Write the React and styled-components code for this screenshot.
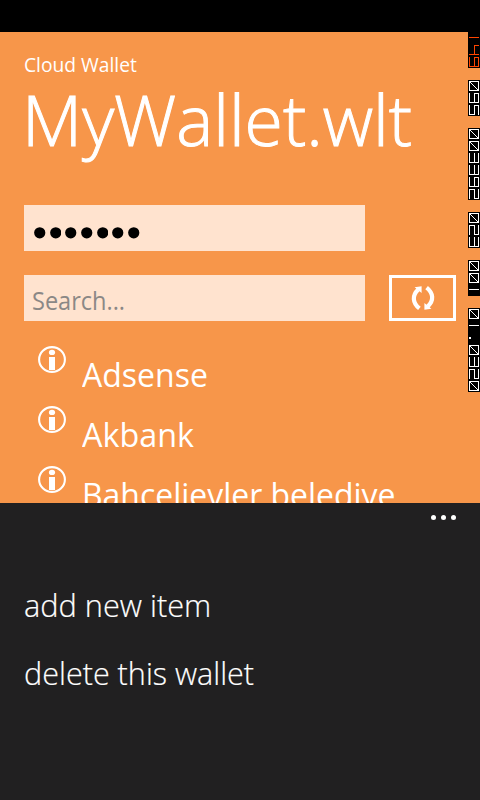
import React from "react";
import styled, { createGlobalStyle } from "styled-components";

const GlobalStyle = createGlobalStyle`
  * { box-sizing: border-box; }
  body { margin: 0; background: #000; }
`;

const Phone = styled.div`
  position: relative;
  display: flex;
  flex-direction: column;
  width: 480px;
  height: 800px;
  overflow: hidden;
  background: #000;
  color: #fff;
  font-family: "Open Sans", "Noto Sans", sans-serif;
`;

const StatusBar = styled.div`
  flex: none;
  height: 32px;
`;

const Page = styled.main`
  flex: none;
  height: 471px;
  padding: 22px 24px 0;
  overflow: hidden;
  background: #f7964a;
`;

const Label = styled.span`
  display: block;
  width: max-content;
  white-space: nowrap;
  transform-origin: 0 50%;
  transform: scaleX(${(p) => p.$stretch || 1});
`;

const AppName = styled.div`
  height: 20px;
  font-size: 19.5px;
  line-height: 21px;
`;

const Title = styled.h1`
  height: 72px;
  margin: 9px 0 50px -2px;
  font-size: 70px;
  line-height: 73px;
  font-weight: 300;
  -webkit-text-stroke: 1px #fff;
`;

const Form = styled.div`
  display: grid;
  grid-template-columns: 341px 67px;
  grid-auto-rows: 46px;
  gap: 24px;
`;

const Field = styled.div`
  display: flex;
  align-items: center;
  gap: 4.2px;
  padding: 4px 8px 0 10px;
  background: #ffe3cf;
  grid-column: 1;
`;

const Bullet = styled.svg`
  flex: none;
  width: 11.5px;
  height: 12px;
  margin-top: 5px;
`;

const Placeholder = styled.span`
  margin-left: -2px;
  color: #8b8886;
  font-size: 26px;
  line-height: 36px;
`;

const RefreshButton = styled.button`
  display: flex;
  align-items: center;
  justify-content: center;
  padding: 0;
  border: 3px solid #fff;
  background: transparent;
`;

const List = styled.ul`
  margin: 24px 0 0;
  padding: 0;
  list-style: none;
`;

const Item = styled.li`
  display: flex;
  gap: 16px;
  height: 60px;
  padding-left: 14px;
`;

const ItemName = styled.span`
  padding-top: 9px;
  font-size: 33.5px;
  line-height: 40px;
`;

const Menu = styled.nav`
  flex: 1;
  padding: 12px 24px;
  background: #212021;
`;

const More = styled.div`
  display: flex;
  justify-content: flex-end;
  gap: 5px;
  height: 68px;
`;

const MoreDot = styled.span`
  width: 5px;
  height: 5px;
  border-radius: 50%;
  background: #fff;
`;

const MenuItem = styled.div`
  height: 68px;
  font-size: 32px;
  line-height: 44px;
  font-weight: 300;
  -webkit-text-stroke: 0.2px #fff;
`;

const Counters = styled.aside`
  position: absolute;
  top: 32px;
  right: 0;
  display: flex;
  flex-direction: column;
  gap: 12px;
`;

const Counter = styled.svg`
  display: block;
  background: #000;
`;

const InfoIcon = () => (
  <svg width="28" height="28" viewBox="0 0 28 28">
    <ellipse cx="14" cy="14.5" rx="12.9" ry="12.4" fill="none" stroke="#fff" strokeWidth="2.1" />
    <ellipse cx="14" cy="7.4" rx="3.1" ry="2.7" fill="#fff" />
    <path d="M11 12h6v13h-6z" fill="#fff" />
  </svg>
);

const RefreshIcon = () => (
  <svg width="24" height="26" viewBox="0 0 24 26">
    <g fill="none" stroke="#fff" strokeWidth="4.2">
      <path d="M8.4 23.4C1.4 17.8 1 10.4 7.2 4.6" />
      <path d="M15.6 2.6C22.6 8.2 23 15.6 16.8 21.4" />
    </g>
    <path d="M3.6 2.3l7-1v6.6zM20.4 23.7l-7 1v-6.6z" fill="#fff" />
  </svg>
);

// Segments in a 12px cell turned a quarter clockwise: glyph top faces right.
const SEG = {
  t: "M10.5 1v10",
  m: "M6.5 1v10",
  b: "M1.5 1v10",
  tl: "M6 1.5h5",
  bl: "M1 1.5h5",
  tr: "M6 10.5h5",
  br: "M1 10.5h5",
  slash: "M1.5 1.5l9 9",
  one: "M1 5.5h10",
  dot: "M1 6h2",
};

const DIGITS = {
  0: ["t", "b", "tl", "bl", "tr", "br", "slash"],
  1: ["one"],
  2: ["t", "tr", "m", "bl", "b"],
  3: ["t", "m", "b", "tr", "br"],
  4: ["tl", "m", "tr", "br"],
  5: ["t", "tl", "m", "br", "b"],
  9: ["t", "tl", "tr", "m", "br", "b"],
  ".": ["dot"],
};

const Readout = ({ value, color = "#fff" }) => (
  <Counter
    width="12"
    height={value.length * 12}
    viewBox={`0 0 12 ${value.length * 12}`}
    role="img"
    aria-label={value}
  >
    {[...value].map((c, i) => (
      <g key={i} transform={`translate(0 ${i * 12})`} fill="none" stroke={color}>
        {DIGITS[c].map((s) => (
          <path key={s} d={SEG[s]} strokeWidth={s === "dot" ? 2 : 1} />
        ))}
      </g>
    ))}
  </Counter>
);

const READOUTS = [
  { value: "149", color: "#ff4500" },
  { value: "095" },
  { value: "003392" },
  { value: "023" },
  { value: "001" },
  { value: "01.0320" },
];

const ITEMS = [
  { name: "Adsense", stretch: 0.955 },
  { name: "Akbank", stretch: 0.965 },
  { name: "Bahcelievler belediye", stretch: 0.953 },
];

export default function App() {
  return (
    <Phone>
      <GlobalStyle />
      <StatusBar />
      <Page>
        <AppName><Label $stretch={0.985}>Cloud Wallet</Label></AppName>
        <Title><Label $stretch={0.995}>MyWallet.wlt</Label></Title>
        <Form>
          <Field>
            {Array.from({ length: 7 }, (_, i) => (
              <Bullet key={i} viewBox="0 0 11.5 12">
                <circle cx="5.75" cy="5.8" r="5.6" />
              </Bullet>
            ))}
          </Field>
          <Field>
            <Placeholder><Label $stretch={0.905}>Search...</Label></Placeholder>
          </Field>
          <RefreshButton aria-label="Refresh"><RefreshIcon /></RefreshButton>
        </Form>
        <List>
          {ITEMS.map((it) => (
            <Item key={it.name}>
              <InfoIcon />
              <ItemName><Label $stretch={it.stretch}>{it.name}</Label></ItemName>
            </Item>
          ))}
        </List>
      </Page>
      <Menu>
        <More><MoreDot /><MoreDot /><MoreDot /></More>
        <MenuItem><Label $stretch={0.96}>add new item</Label></MenuItem>
        <MenuItem><Label $stretch={0.955}>delete this wallet</Label></MenuItem>
      </Menu>
      <Counters>
        {READOUTS.map((r) => <Readout key={r.value} {...r} />)}
      </Counters>
    </Phone>
  );
}
